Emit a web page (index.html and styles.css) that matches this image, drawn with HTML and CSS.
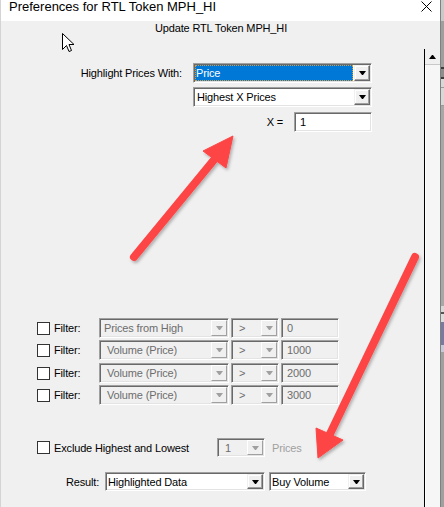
FILE: index.html
```html
<!DOCTYPE html>
<html>
<head>
<meta charset="utf-8">
<link rel="stylesheet" href="styles.css">
</head>
<body>
<div class="window">
  <div class="main">
    <div class="titlebar">
      <span class="title">Preferences for RTL Token MPH_HI</span>
      <svg class="close" width="11" height="11" viewBox="0 0 11 11"><path d="M0.5 0.5 L10.5 10.5 M10.5 0.5 L0.5 10.5" stroke="#000" stroke-width="1" fill="none"/></svg>
    </div>
    <div class="subtitle">Update RTL Token MPH_HI</div>
    <div class="body">
      <div class="panel">
        <div class="row row-hl">
          <span class="lbl lbl-hl">Highlight Prices With:</span>
          <div class="combo combo-hl"><span class="val sel">Price</span><span class="btn"></span></div>
        </div>
        <div class="row row-mode">
          <div class="combo combo-hl"><span class="val">Highest X Prices</span><span class="btn"></span></div>
        </div>
        <div class="row row-x">
          <span class="lbl lbl-x">X =</span>
          <div class="field field-x">1</div>
        </div>

        <div class="row frow frow1">
          <span class="chk"></span><span class="flbl">Filter:</span>
          <div class="combo dis c-field"><span class="val tight">Prices from High</span><span class="btn"></span></div>
          <div class="combo dis c-op"><span class="val">&gt;</span><span class="btn"></span></div>
          <div class="field dis c-num">0</div>
        </div>
        <div class="row frow frow2">
          <span class="chk"></span><span class="flbl">Filter:</span>
          <div class="combo dis c-field"><span class="val">Volume (Price)</span><span class="btn"></span></div>
          <div class="combo dis c-op"><span class="val">&gt;</span><span class="btn"></span></div>
          <div class="field dis c-num">1000</div>
        </div>
        <div class="row frow frow3">
          <span class="chk"></span><span class="flbl">Filter:</span>
          <div class="combo dis c-field"><span class="val">Volume (Price)</span><span class="btn"></span></div>
          <div class="combo dis c-op"><span class="val">&gt;</span><span class="btn"></span></div>
          <div class="field dis c-num">2000</div>
        </div>
        <div class="row frow frow4">
          <span class="chk"></span><span class="flbl">Filter:</span>
          <div class="combo dis c-field"><span class="val">Volume (Price)</span><span class="btn"></span></div>
          <div class="combo dis c-op"><span class="val">&gt;</span><span class="btn"></span></div>
          <div class="field dis c-num">3000</div>
        </div>

        <div class="row row-ex">
          <span class="chk"></span><span class="exlbl">Exclude Highest and Lowest</span>
          <div class="combo dis c-cnt"><span class="val">1</span><span class="btn"></span></div>
          <span class="prices">Prices</span>
        </div>
        <div class="row row-res">
          <span class="lbl">Result:</span>
          <div class="combo c-res"><span class="val">Highlighted Data</span><span class="btn"></span></div>
          <div class="combo c-res2"><span class="val">Buy Volume</span><span class="btn"></span></div>
        </div>
      </div>
      <div class="vline"></div>
      <div class="scroll"><div class="up"><span class="uptri"></span></div><div class="track"></div></div>
    </div>
  </div>
  <div class="strip"></div>

  <svg class="cursor" width="14" height="21" viewBox="0 0 14 21">
    <path d="M0.5 0.5 V16.5 L4.5 12.5 L7 18.5 L9.5 17.5 L7 11.5 H12 Z" fill="#fff" stroke="#000" stroke-width="1" stroke-linejoin="miter"/>
  </svg>

  <svg class="arrows" width="444" height="507" viewBox="0 0 444 507">
    <defs>
      <filter id="sh" x="-20%" y="-20%" width="140%" height="140%">
        <feDropShadow dx="1.5" dy="2" stdDeviation="1.5" flood-color="#000" flood-opacity="0.28"/>
      </filter>
    </defs>
    <g filter="url(#sh)" fill="#fe4545" stroke="#fe4545">
      <line x1="134" y1="257" x2="218" y2="155" stroke-width="8" stroke-linecap="round"/>
      <polygon points="233,136 203,151 226,168" stroke-width="1" stroke-linejoin="round"/>
      <line x1="415" y1="257" x2="329" y2="436" stroke-width="8" stroke-linecap="round"/>
      <polygon points="318,458 316,428 343,440" stroke-width="1" stroke-linejoin="round"/>
    </g>
  </svg>
</div>
</body>
</html>
```

FILE: styles.css
```css
html, body {
  margin: 0;
  padding: 0;
}
body {
  width: 444px;
  height: 507px;
  overflow: hidden;
  background: #f0f0f0;
  font-family: "Liberation Sans", Arial, sans-serif;
  font-size: 11px;
  letter-spacing: -0.15px;
  color: #000;
}
.window {
  position: relative;
  display: flex;
  width: 444px;
  height: 507px;
}
.main {
  width: 440px;
  display: flex;
  flex-direction: column;
  border-left: 1px solid #d4d4d4;
  box-sizing: border-box;
}
.titlebar {
  height: 21px;
  background: #fff;
  display: flex;
  justify-content: space-between;
  align-items: flex-start;
  padding-left: 8px;
  padding-right: 8px;
}
.title {
  font-size: 13px;
  letter-spacing: 0;
  line-height: 14px;
  color: #000;
}
.close {
  margin-top: 1px;
}
.subtitle {
  height: 28px;
  line-height: 14px;
  text-align: center;
  padding-left: 1px;
}
.body {
  flex: 1;
  display: flex;
}
.panel {
  width: 423px;
  display: flex;
  flex-direction: column;
}
.vline {
  width: 1px;
  background: #000;
}
.scroll {
  width: 15px;
  display: flex;
  flex-direction: column;
  background: #f6f6f6;
}
.up {
  height: 16px;
  box-sizing: border-box;
  border-bottom: 1px solid #c8c8c8;
  background: #f0f0f0;
  display: flex;
  align-items: center;
  justify-content: center;
}
.uptri {
  width: 1px;
  height: 0;
  border-left: 3px solid transparent;
  border-right: 3px solid transparent;
  border-bottom: 4px solid #000;
}
.track {
  flex: 1;
  border-left: 1px solid #fff;
}
.strip {
  width: 4px;
  background:
    linear-gradient(to bottom,
      #c9c9c9 0, #c9c9c9 21px,
      #9f9f9f 21px, #9f9f9f 67px,
      #3c3c3c 67px, #3c3c3c 69px,
      #8e8e8e 69px, #8e8e8e 77px,
      #3c3c3c 77px, #3c3c3c 79px,
      #d8d8d8 79px, #d8d8d8 87px,
      #9a9a9a 87px, #9a9a9a 88px,
      #d8d8d8 88px, #d8d8d8 105px,
      #9a9a9a 105px, #9a9a9a 106px,
      #a8a8a8 106px, #a8a8a8 306px,
      #d8d8d8 306px, #d8d8d8 312px,
      #555 312px, #555 314px,
      #dcdcdc 314px, #dcdcdc 322px,
      #7a7aa0 322px, #7a7aa0 345px,
      #c8c8d8 345px, #c8c8d8 352px,
      #a0a0a0 352px, #a0a0a0 507px);
  border-left: 1px solid #808080;
  box-sizing: border-box;
}

/* rows */
.row {
  display: flex;
  align-items: center;
  height: 20px;
}
.lbl {
  white-space: nowrap;
}
.row-hl { margin-top: 14px; }
.lbl-hl {
  width: 181px;
  text-align: right;
  margin-right: 11px;
}
.row-mode {
  margin-top: 4px;
  padding-left: 192px;
}
.row-x {
  margin-top: 5px;
}
.lbl-x {
  width: 282px;
  text-align: right;
  margin-right: 11px;
}

/* combo box */
.combo {
  display: flex;
  height: 20px;
  box-sizing: border-box;
  border: 1px solid;
  border-color: #a0a0a0 #fff #fff #a0a0a0;
  box-shadow: inset 1px 1px #696969, inset -1px -1px #e3e3e3;
  background: #fff;
  padding: 1px;
}
.combo .val {
  flex: 1;
  padding-left: 2px;
  line-height: 16px;
  white-space: nowrap;
  overflow: hidden;
}
.combo .val.sel {
  background: #0078d7;
  color: #fff;
  margin: 0 1px 0 0;
  outline: 1px dotted #d99a3c;
  outline-offset: -1px;
  padding-left: 1px;
}
.combo .btn {
  width: 16px;
  box-sizing: border-box;
  border: 1px solid;
  border-color: #f0f0f0 #696969 #696969 #f0f0f0;
  box-shadow: inset -1px -1px #a0a0a0, inset 1px 1px #fff;
  background: #f0f0f0;
  display: flex;
  align-items: center;
  justify-content: center;
}
.combo .btn::after {
  content: "";
  width: 1px;
  height: 0;
  border-left: 3px solid transparent;
  border-right: 3px solid transparent;
  border-top: 4px solid #000;
}
.combo-hl {
  width: 179px;
}

.combo.dis {
  background: #f0f0f0;
  color: #6d6d6d;
}
.combo.dis .val {
  padding-left: 6px;
}
.combo.dis .val.tight {
  padding-left: 3px;
}
.combo.dis .btn {
  border-color: #fff #a0a0a0 #a0a0a0 #fff;
  box-shadow: none;
}
.combo.dis .btn::after {
  border-top-color: #a0a0a0;
}

/* text field */
.field {
  height: 20px;
  box-sizing: border-box;
  border: 1px solid;
  border-color: #a0a0a0 #fff #fff #a0a0a0;
  box-shadow: inset 1px 1px #696969, inset -1px -1px #e3e3e3;
  background: #fff;
  padding-left: 5px;
  line-height: 18px;
}
.field-x {
  width: 78px;
}
.field.dis {
  background: #f0f0f0;
  color: #6d6d6d;
}

/* checkbox */
.chk {
  width: 13px;
  height: 13px;
  box-sizing: border-box;
  border: 1px solid #333;
  background: #fff;
  flex: none;
}

/* filter rows */
.frow {
  padding-left: 36px;
}
.frow1 { margin-top: 186px; }
.frow2 { margin-top: 2px; }
.frow3 { margin-top: 3px; }
.frow4 { margin-top: 2px; }
.flbl {
  width: 45px;
  margin-left: 4px;
}
.c-field { width: 130px; }
.c-op { width: 48px; margin-left: 2px; }
.c-num { width: 58px; margin-left: 2px; }

.row-ex {
  margin-top: 33px;
  padding-left: 36px;
  height: 19px;
}
.row-ex .combo { height: 19px; }
.exlbl {
  width: 163px;
  margin-left: 4px;
}
.c-cnt { width: 48px; }
.prices {
  margin-left: 7px;
  color: #a0a0a0;
}

.row-res {
  margin-top: 15px;
  padding-left: 65px;
  height: 19px;
}
.row-res .combo { height: 19px; }
.row-res .lbl {
  width: 39px;
}
.c-res { width: 160px; }
.c-res .val, .c-res2 .val { padding-left: 1px; }
.c-res2 { width: 97px; margin-left: 4px; }

/* overlays */
.cursor {
  position: absolute;
  left: 62px;
  top: 33px;
}
.arrows {
  position: absolute;
  left: 0;
  top: 0;
  pointer-events: none;
}
```
